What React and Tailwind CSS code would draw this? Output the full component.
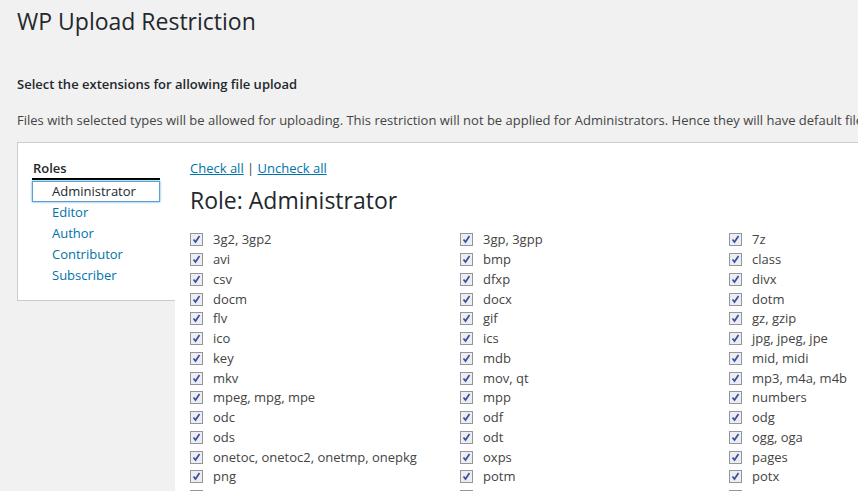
import React from 'react';

const roles = ['Administrator', 'Editor', 'Author', 'Contributor', 'Subscriber'];

const extensions = [
    '3g2, 3gp2', '3gp, 3gpp', '7z',
    'avi', 'bmp', 'class',
    'csv', 'dfxp', 'divx',
    'docm', 'docx', 'dotm',
    'flv', 'gif', 'gz, gzip',
    'ico', 'ics', 'jpg, jpeg, jpe',
    'key', 'mdb', 'mid, midi',
    'mkv', 'mov, qt', 'mp3, m4a, m4b',
    'mpeg, mpg, mpe', 'mpp', 'numbers',
    'odc', 'odf', 'odg',
    'ods', 'odt', 'ogg, oga',
    'onetoc, onetoc2, onetmp, onepkg', 'oxps', 'pages',
    'png', 'potm', 'potx',
    'ppam', 'pps', 'ppsm',
];

const CheckBox = () => (
    <span className="w-[13px] h-[13px] shrink-0 border border-[#959595] bg-[#eceef3] flex items-center justify-center">
        <svg width="9" height="9" viewBox="0 0 9 9">
            <path d="M1.5 4.5 L3.5 7 L7.5 1" fill="none" stroke="#3a4f9c" strokeWidth="1.7" />
        </svg>
    </span>
);

const App = () => {
    return (
        <div className="min-h-[491px] h-[491px] overflow-hidden bg-[#f1f1f1] text-[13px] text-[#444]" style={{ fontFamily: '"Open Sans", sans-serif' }}>
            <div className="pl-[17px]">
                <h1 className="pt-[7px] text-[23px] leading-[29px] text-[#23282d]">WP Upload Restriction</h1>

                <p className="mt-[38px] font-semibold leading-[20px] text-[#23282d]">Select the extensions for allowing file upload</p>
                <p className="mt-[16px] leading-[20px] whitespace-nowrap">
                    Files with selected types will be allowed for uploading. This restriction will not be applied for Administrators. Hence they will have default file types allowed.
                </p>

                <div className="mt-[12px] flex w-[900px]">
                    <div className="w-[158px] shrink-0 self-start bg-white border-l border-t border-b border-[#cccccc] pt-[15px] pb-[14px] pl-[14px] pr-[14px]">
                        <div className="w-[128px] pl-[1px] font-semibold text-[#23282d] leading-[20px] border-b-2 border-black">Roles</div>
                        <ul className="mt-[1px] w-[128px]">
                            {roles.map((role, i) => (
                                <li
                                    key={role}
                                    className={`h-[21px] leading-[19px] pl-[19px] border ${i === 0 ? 'border-[#5b9dd9] shadow-[0_0_2px_rgba(30,140,190,0.8)] text-[#23282d]' : 'border-transparent text-[#0073aa]'}`}
                                >
                                    {role}
                                </li>
                            ))}
                        </ul>
                    </div>

                    <div className="flex-1 bg-white border-t border-[#cccccc] pt-[15px] pl-[15px] min-h-[400px]">
                        <div className="leading-[20px]">
                            <a className="text-[#0073aa] underline">Check all</a>
                            <span> | </span>
                            <a className="text-[#0073aa] underline">Uncheck all</a>
                        </div>
                        <h2 className="mt-[7px] text-[23px] leading-[30px] text-[#23282d]">Role: Administrator</h2>

                        <div className="mt-[15px] grid grid-cols-[270px_269px_200px]">
                            {extensions.map((ext) => (
                                <label key={ext} className="h-[19.75px] flex items-center gap-[10px] whitespace-nowrap">
                                    <CheckBox />
                                    <span className="leading-[19px]">{ext}</span>
                                </label>
                            ))}
                        </div>
                    </div>
                </div>
            </div>
        </div>
    );
};

export default App;
